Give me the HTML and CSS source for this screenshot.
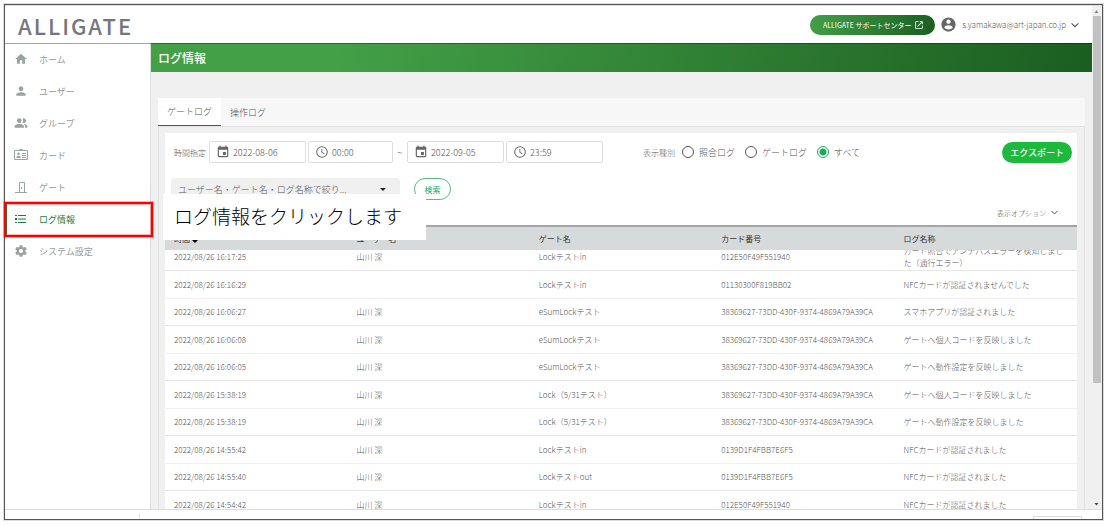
FILE: index.html
```html
<!DOCTYPE html>
<html lang="ja">
<head>
    <meta charset="UTF-8">
    <title>ALLIGATE - ログ情報</title>
    <link rel="stylesheet" href="styles.css">
</head>
<body>
    <div class="window">
        <div class="screen">
            <div class="app">
                <header class="header">
                    <div class="logo">ALLIGATE</div>
                    <div class="header-right">
                        <a href="#" class="support">ALLIGATE サポートセンター
                            <svg width="10" height="10" viewBox="0 0 24 24"><path fill="#fff" d="M19 19H5V5h6V3H5a2 2 0 0 0-2 2v14a2 2 0 0 0 2 2h14a2 2 0 0 0 2-2v-6h-2zM14 3v2h3.600l-9.800 9.800 1.400 1.400L19 6.400V10h2V3z"/></svg>
                        </a>
                        <button class="account" type="button">
                            <svg width="17" height="17" viewBox="0 0 24 24"><path fill="#666" d="M12 2C6.480 2 2 6.480 2 12s4.480 10 10 10 10-4.480 10-10S17.520 2 12 2zm0 3c1.660 0 3 1.340 3 3s-1.340 3-3 3-3-1.340-3-3 1.340-3 3-3zm0 14.200c-2.500 0-4.710-1.280-6-3.220.030-1.990 4-3.080 6-3.080 1.990 0 5.970 1.090 6 3.080-1.290 1.940-3.500 3.220-6 3.220z"/></svg>
                            <span>s.yamakawa@art-japan.co.jp</span>
                            <svg width="8" height="8" viewBox="0 0 7 7"><path d="M.5 2l3 3 3-3" fill="none" stroke="#555"/></svg>
                        </button>
                    </div>
                </header>
                <div class="body">
                    <nav class="side">
                        <a href="#" class="side-item">
                            <svg width="14" height="14" viewBox="0 0 24 24"><path d="M10 20v-6h4v6h5v-8h3L12 3 2 12h3v8z"/></svg>
                            <span>ホーム</span>
                        </a>
                        <a href="#" class="side-item">
                            <svg width="14" height="14" viewBox="0 0 24 24"><path d="M12 12c2.210 0 4-1.790 4-4s-1.790-4-4-4-4 1.790-4 4 1.790 4 4 4zm0 2c-2.670 0-8 1.340-8 4v2h16v-2c0-2.660-5.330-4-8-4z"/></svg>
                            <span>ユーザー</span>
                        </a>
                        <a href="#" class="side-item">
                            <svg width="14" height="14" viewBox="0 0 24 24"><path d="M9 12a4 4 0 1 0 0-8 4 4 0 0 0 0 8zM14.500 4.600a4 4 0 1 1 0 6.800 6 6 0 0 0 0-6.800zM9 13.500c-3 0-8 1.300-8 4V20h16v-2.500c0-2.700-5-4-8-4zM17 13.600c3 .5 6 1.800 6 3.900V20h-4v-2.500c0-1.600-.8-2.900-2-3.900z"/></svg>
                            <span>グループ</span>
                        </a>
                        <a href="#" class="side-item">
                            <svg width="14" height="14" viewBox="0 0 14 14"><path fill="none" stroke="#9ba3a1" d="M.5 2.500h13v9H.5z"/><path d="M5.500 1h3v2h-3zM4.500 4.500a1.300 1.300 0 1 1 0 2.600 1.300 1.300 0 0 1 0-2.600zM2.300 10c0-3 4.400-3 4.400 0zM8 5h4v1H8zM8 7h4v1H8zM8 9h4v1H8z"/></svg>
                            <span>カード</span>
                        </a>
                        <a href="#" class="side-item">
                            <svg width="14" height="14" viewBox="0 0 14 14"><path fill="none" stroke="#9ba3a1" d="M1 12.500h4.500v-10h5v10M13 12.500H5.500"/><path d="M7 7h1v2H7z"/></svg>
                            <span>ゲート</span>
                        </a>
                        <a href="#" class="side-item active">
                            <svg width="14" height="14" viewBox="0 0 14 14"><path d="M1 3h2v1H1zM1 6h2v2H1zM1 10h2v1H1zM4 3h8v1H4zM4 6.500h8v1H4zM4 10h8v1H4z"/></svg>
                            <span>ログ情報</span>
                        </a>
                        <a href="#" class="side-item">
                            <svg width="14" height="14" viewBox="0 0 24 24"><path d="M19.430 12.980c.04-.32.07-.64.07-.98s-.03-.66-.07-.98l2.110-1.650c.19-.15.24-.42.12-.64l-2-3.460c-.12-.22-.39-.3-.61-.22l-2.490 1c-.52-.4-1.080-.73-1.690-.98l-.38-2.650C14.460 2.180 14.250 2 14 2h-4c-.25 0-.46.18-.49.42l-.38 2.650c-.61.25-1.170.59-1.690.98l-2.490-1c-.23-.09-.49 0-.61.22l-2 3.460c-.13.22-.07.49.12.64l2.110 1.650c-.04.32-.07.65-.07.98s.03.66.07.98l-2.110 1.650c-.19.15-.24.42-.12.64l2 3.460c.12.22.39.3.61.22l2.490-1c.52.4 1.080.73 1.690.98l.38 2.650c.03.24.24.42.49.42h4c.25 0 .46-.18.49-.42l.38-2.650c.61-.25 1.170-.59 1.690-.98l2.490 1c.23.09.49 0 .61-.22l2-3.460c.12-.22.07-.49-.12-.64zM12 15.500a3.500 3.500 0 1 1 0-7 3.500 3.500 0 0 1 0 7z"/></svg>
                            <span>システム設定</span>
                        </a>
                    </nav>
                    <main class="main">
                        <h1 class="title">ログ情報</h1>
                        <div class="tabs">
                            <button class="tab active" type="button">ゲートログ</button>
                            <button class="tab" type="button">操作ログ</button>
                        </div>
                        <div class="panel">
                            <div class="card">
                                <form class="filter">
                                    <span class="label">時間指定</span>
                                    <label class="field">
                                        <svg width="14" height="14" viewBox="0 0 24 24"><path d="M17 12h-5v5h5v-5zM16 1v2H8V1H6v2H5c-1.110 0-1.990.9-1.990 2L3 19c0 1.100.89 2 2 2h14c1.100 0 2-.9 2-2V5c0-1.100-.9-2-2-2h-1V1h-2zm3 18H5V8h14v11z"/></svg>
                                        <input type="text" value="2022-08-06" aria-label="開始日">
                                    </label>
                                    <label class="field time">
                                        <svg width="14" height="14" viewBox="0 0 24 24"><path d="M12 2a10 10 0 1 0 0 20 10 10 0 0 0 0-20zm0 18.200a8.200 8.200 0 1 1 0-16.400 8.200 8.200 0 0 1 0 16.400zM12.500 7H11v6l4.700 3 .8-1.300-4-2.500z"/></svg>
                                        <input type="text" value="00:00" aria-label="開始時刻">
                                    </label>
                                    <span class="tilde">~</span>
                                    <label class="field">
                                        <svg width="14" height="14" viewBox="0 0 24 24"><path d="M17 12h-5v5h5v-5zM16 1v2H8V1H6v2H5c-1.110 0-1.990.9-1.990 2L3 19c0 1.100.89 2 2 2h14c1.100 0 2-.9 2-2V5c0-1.100-.9-2-2-2h-1V1h-2zm3 18H5V8h14v11z"/></svg>
                                        <input type="text" value="2022-09-05" aria-label="終了日">
                                    </label>
                                    <label class="field">
                                        <svg width="14" height="14" viewBox="0 0 24 24"><path d="M12 2a10 10 0 1 0 0 20 10 10 0 0 0 0-20zm0 18.200a8.200 8.200 0 1 1 0-16.400 8.200 8.200 0 0 1 0 16.400zM12.500 7H11v6l4.700 3 .8-1.300-4-2.500z"/></svg>
                                        <input type="text" value="23:59" aria-label="終了時刻">
                                    </label>
                                    <div class="kinds">
                                        <span class="label">表示種別</span>
                                        <label><input type="radio" name="kind">照合ログ</label>
                                        <label><input type="radio" name="kind">ゲートログ</label>
                                        <label><input type="radio" name="kind" checked>すべて</label>
                                    </div>
                                    <button class="export" type="button">エクスポート</button>
                                </form>
                                <div class="search">
                                    <div class="select">
                                        <select aria-label="絞り込み">
                                            <option>ユーザー名・ゲート名・ログ名称で絞り...</option>
                                        </select>
                                    </div>
                                    <button class="search-btn" type="button">検索</button>
                                </div>
                                <div class="option">
                                    <button type="button">表示オプション
                                        <svg width="7" height="7" viewBox="0 0 7 7"><path d="M.5 2l3 3 3-3" fill="none" stroke="#555"/></svg>
                                    </button>
                                </div>
                                <div class="table-wrap">
                                    <table>
                                        <thead>
                                            <tr>
                                                <th>時間 <svg width="6" height="7" viewBox="0 0 8 9"><path d="M4 0l4 4H0zM0 5h8L4 9z"/></svg></th>
                                                <th>ユーザー名</th>
                                                <th>ゲート名</th>
                                                <th>カード番号</th>
                                                <th>ログ名称</th>
                                            </tr>
                                        </thead>
                                        <tbody>
                                            <tr><td>2022/08/26 16:17:25</td><td>山川 深</td><td>Lockテストin</td><td>012E50F49F551940</td><td>カード照合でアンチパスエラーを検知しました（通行エラー）</td></tr>
                                            <tr><td>2022/08/26 16:16:29</td><td></td><td>Lockテストin</td><td>01130300F819BB02</td><td>NFCカードが認証されませんでした</td></tr>
                                            <tr><td>2022/08/26 16:06:27</td><td>山川 深</td><td>eSumLockテスト</td><td>38369627-73DD-430F-9374-4869A79A39CA</td><td>スマホアプリが認証されました</td></tr>
                                            <tr><td>2022/08/26 16:06:08</td><td>山川 深</td><td>eSumLockテスト</td><td>38369627-73DD-430F-9374-4869A79A39CA</td><td>ゲートへ個人コードを反映しました</td></tr>
                                            <tr><td>2022/08/26 16:06:05</td><td>山川 深</td><td>eSumLockテスト</td><td>38369627-73DD-430F-9374-4869A79A39CA</td><td>ゲートへ動作設定を反映しました</td></tr>
                                            <tr><td>2022/08/26 15:38:19</td><td>山川 深</td><td>Lock（5/31テスト）</td><td>38369627-73DD-430F-9374-4869A79A39CA</td><td>ゲートへ個人コードを反映しました</td></tr>
                                            <tr><td>2022/08/26 15:38:19</td><td>山川 深</td><td>Lock（5/31テスト）</td><td>38369627-73DD-430F-9374-4869A79A39CA</td><td>ゲートへ動作設定を反映しました</td></tr>
                                            <tr><td>2022/08/26 14:55:42</td><td>山川 深</td><td>Lockテストin</td><td>0139D1F4FBB7E6F5</td><td>NFCカードが認証されました</td></tr>
                                            <tr><td>2022/08/26 14:55:40</td><td>山川 深</td><td>Lockテストout</td><td>0139D1F4FBB7E6F5</td><td>NFCカードが認証されました</td></tr>
                                            <tr><td>2022/08/26 14:54:42</td><td>山川 深</td><td>Lockテストin</td><td>012E50F49F551940</td><td>NFCカードが認証されました</td></tr>
                                        </tbody>
                                    </table>
                                </div>
                            </div>
                        </div>
                    </main>
                </div>
            </div>
            <div class="scrollbar">
                <svg width="9" height="10" viewBox="0 0 9 10"><path fill="#888" d="M4.500 4l2 3h-4z"/></svg>
                <div class="track"><div class="thumb"></div></div>
                <svg width="9" height="10" viewBox="0 0 9 10"><path fill="#444" d="M2.500 4h4l-2 2.500z"/></svg>
            </div>
        </div>
        <div class="status"><i></i><span></span></div>
        <div class="mark"></div>
        <div class="callout">ログ情報をクリックします</div>
    </div>
    <script>
        // 一覧を少しスクロールした状態にする
        var oWrap = document.getElementsByClassName("table-wrap")[0];
        oWrap.scrollTop = 6;
    </script>
</body>
</html>
```

FILE: styles.css
```css
*{
    box-sizing: border-box;
}
body{
    height: 100vh;
    margin: 0;
    padding: 4px 5px 6px 4px;
    overflow: hidden;
    background: #fff;
    color: #555;
    font-family: "Noto Sans CJK JP", sans-serif;
    font-size: 9px;
    font-weight: 300;
}
a{
    text-decoration: none;
}
button,input,select{
    margin: 0;
    padding: 0;
    border: 0;
    background: none;
    color: inherit;
    font: inherit;
}
button{
    cursor: pointer;
}
svg{
    flex: none;
}
.window{
    position: relative;
    display: flex;
    flex-direction: column;
    height: 100%;
    border: 1px solid #555;
    outline: 1px solid #ddd;
}
.screen{
    flex: 1;
    display: flex;
    min-height: 0;
    border-top: 1px solid #ddd;
}
.app{
    flex: 1;
    display: flex;
    flex-direction: column;
    min-width: 0;
}
.header{
    position: relative;
    z-index: 1;
    flex: none;
    display: flex;
    justify-content: space-between;
    align-items: center;
    height: 37px;
    padding: 0 13px;
    background: #fff;
    box-shadow: 0 1px 0 rgba(0, 0, 0, .35);
}
.logo{
    color: #75757d;
    font-size: 22px;
    font-weight: 500;
    letter-spacing: 2px;
}
.header-right{
    display: flex;
    align-items: center;
    gap: 5px;
}
.support{
    display: flex;
    align-items: center;
    gap: 3px;
    height: 20px;
    padding: 0 11px 0 13px;
    border-radius: 10px;
    background: linear-gradient(100deg, #43a047, #1b5e20);
    color: #fff;
    font-size: 7px;
    font-weight: 400;
}
.account{
    display: flex;
    align-items: center;
    gap: 5px;
    font-size: 8px;
}
.body{
    flex: 1;
    display: flex;
    min-height: 0;
}
.side{
    flex: none;
    width: 146px;
    border-right: 1px solid #ddd;
    background: #fff;
}
.side-item{
    display: flex;
    align-items: center;
    gap: 11px;
    height: 32px;
    padding-left: 8px;
    border-left: 1px solid transparent;
    color: #959d9b;
    fill: #9ba3a1;
    font-weight: 400;
}
.side-item.active{
    border-left-color: #1b7a45;
    color: #1b7a45;
    fill: #1b7a45;
    box-shadow: inset 1px 0 0 #1b7a45;
}
.main{
    flex: 1;
    display: flex;
    flex-direction: column;
    min-width: 0;
    background: #f0f0f0;
}
.title{
    flex: none;
    height: 29px;
    margin: 0 0 26px;
    padding-left: 7px;
    background: linear-gradient(100deg, #43a047, #43a047 20%, #1b5e20);
    color: #fff;
    font-size: 12px;
    font-weight: 500;
    line-height: 29px;
}
.tabs{
    flex: none;
    display: flex;
    height: 28px;
    margin: 0 7px;
    background: #f7f7f7;
}
.tab{
    padding: 0 9px;
}
.tab.active{
    border-bottom: 1px solid #1b7a45;
    background: #fff;
}
.panel{
    flex: 1;
    display: flex;
    min-height: 0;
    margin: 0 7px;
    padding: 6px 7px 0 6px;
    border: 1px solid #e2e2e2;
    border-bottom: 0;
}
.card{
    flex: 1;
    display: flex;
    flex-direction: column;
    min-width: 0;
    padding-top: 8px;
    background: #fff;
}
.filter{
    display: flex;
    align-items: center;
    gap: 2px;
    height: 22px;
    margin: 0 5px 15px 9px;
}
.label{
    margin-right: 1px;
    font-size: 8px;
    white-space: nowrap;
}
.field{
    display: flex;
    align-items: center;
    gap: 3px;
    width: 97px;
    height: 22px;
    padding-left: 6px;
    border: 1px solid #ddd;
    border-radius: 2px;
    fill: #666;
}
.field.time{
    width: 85px;
}
.field input{
    flex: 1;
    min-width: 0;
    outline: none;
}
.tilde{
    width: 10px;
    text-align: center;
}
.kinds{
    display: flex;
    align-items: center;
    gap: 10px;
    margin-left: 38px;
}
.kinds .label{
    margin-right: -3px;
}
.kinds label{
    display: flex;
    align-items: center;
    gap: 5px;
    white-space: nowrap;
}
.kinds input{
    appearance: none;
    width: 12px;
    height: 12px;
    border: 1px solid #555;
    border-radius: 50%;
}
.kinds input:checked{
    border-color: #1fa75b;
    background: radial-gradient(circle, #1fa75b 3px, #fff 4px);
}
.export{
    height: 21px;
    margin-left: auto;
    padding: 0 8px;
    border-radius: 11px;
    background: #1db93c;
    color: #fff;
    font-weight: 500;
}
.search{
    display: flex;
    gap: 14px;
    height: 22px;
    padding-left: 6px;
}
.select{
    position: relative;
    width: 229px;
    border-radius: 3px;
    background: #f0f0f0;
}
.select select{
    appearance: none;
    width: 100%;
    height: 100%;
    padding-left: 7px;
}
.select:after{
    content: "";
    position: absolute;
    top: 10px;
    right: 14px;
    border: 3px solid transparent;
    border-top-color: #222;
}
.search-btn{
    width: 37px;
    border: 1px solid #55bd84;
    border-radius: 11px;
    color: #1fa75b;
    font-size: 8px;
    font-weight: 400;
}
.option{
    display: flex;
    justify-content: flex-end;
    height: 25px;
    padding-right: 19px;
}
.option button{
    display: flex;
    align-items: center;
    gap: 5px;
    font-size: 7px;
}
.table-wrap{
    flex: 1;
    min-height: 0;
    overflow: hidden;
}
table{
    width: 100%;
    table-layout: fixed;
    border-collapse: separate;
    border-spacing: 0;
    font-size: 8px;
    line-height: 12px;
}
th,td{
    padding: 0 9px;
    text-align: left;
}
th{
    position: sticky;
    top: 0;
    height: 25px;
    border-top: 2px solid #a3a6a6;
    background: #d6dadb;
    color: #333;
    font-weight: 400;
}
th svg{
    vertical-align: middle;
}
td{
    height: 27px;
    border-bottom: 1px solid #e6e6e6;
}
tr:nth-child(even) td{
    height: 28px;
    border-bottom-color: #f0f0f0;
}
.scrollbar{
    flex: none;
    display: flex;
    flex-direction: column;
    width: 10px;
    background: #f0f0f0;
}
.track{
    flex: 1;
    padding: 0 1px;
}
.thumb{
    height: 76%;
    background: #c1c1c1;
}
.status{
    display: flex;
    justify-content: space-between;
    align-items: flex-end;
    height: 10px;
    padding: 0 20px 0 134px;
    border-top: 1px solid #ddd;
}
.status i{
    height: 6px;
    border-left: 1px solid #e6e6e6;
}
.status span{
    width: 49px;
    height: 3px;
    border: 1px solid #ddd;
    border-bottom: 0;
}
.mark{
    position: absolute;
    z-index: 2;
    top: 197px;
    left: -1px;
    width: 149px;
    height: 35px;
    border: 2px solid #f00;
    box-shadow: 0 0 0 1px rgba(255, 0, 0, .3), inset 0 0 0 1px rgba(255, 0, 0, .3);
}
.callout{
    position: absolute;
    z-index: 2;
    top: 189px;
    left: 158px;
    height: 46px;
    padding: 0 24px 0 11px;
    background: #fff;
    color: #000;
    font-size: 19px;
    line-height: 44px;
}
```
